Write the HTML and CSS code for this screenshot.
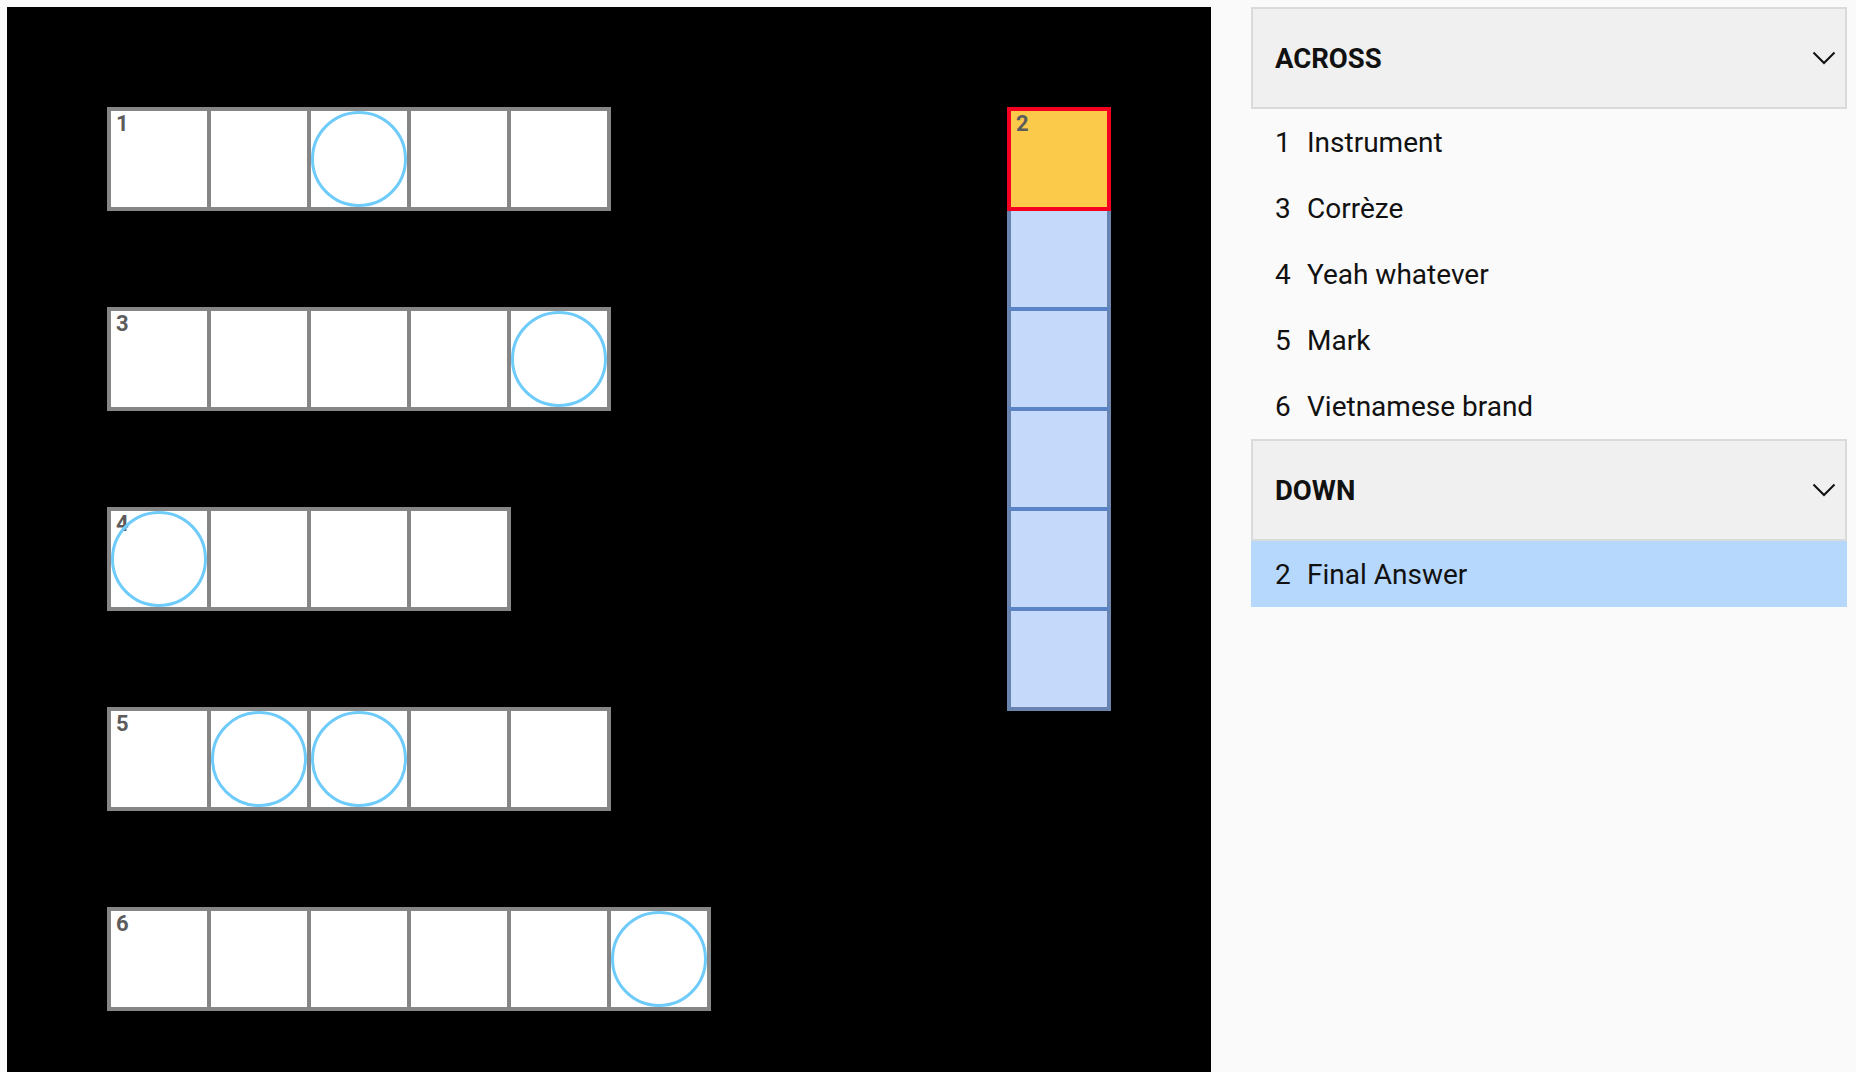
FILE: index.html
```html
<!DOCTYPE html>
<html lang="en">
<head>
<meta charset="utf-8">
<title>Crossword</title>
<link rel="stylesheet" href="styles.css">
</head>
<body>
<div class="app">
  <div class="board">
    <div class="word across w1">
      <div class="cell"><span class="num">1</span></div>
      <div class="cell"></div>
      <div class="cell"><span class="circle"></span></div>
      <div class="cell"></div>
      <div class="cell"></div>
    </div>
    <div class="word across w3">
      <div class="cell"><span class="num">3</span></div>
      <div class="cell"></div>
      <div class="cell"></div>
      <div class="cell"></div>
      <div class="cell"><span class="circle"></span></div>
    </div>
    <div class="word across w4">
      <div class="cell"><span class="num">4</span><span class="circle"></span></div>
      <div class="cell"></div>
      <div class="cell"></div>
      <div class="cell"></div>
    </div>
    <div class="word across w5">
      <div class="cell"><span class="num">5</span></div>
      <div class="cell"><span class="circle"></span></div>
      <div class="cell"><span class="circle"></span></div>
      <div class="cell"></div>
      <div class="cell"></div>
    </div>
    <div class="word across w6">
      <div class="cell"><span class="num">6</span></div>
      <div class="cell"></div>
      <div class="cell"></div>
      <div class="cell"></div>
      <div class="cell"></div>
      <div class="cell"><span class="circle"></span></div>
    </div>
    <div class="word down w2">
      <div class="cell active"><span class="num">2</span></div>
      <div class="cell hl"></div>
      <div class="cell hl"></div>
      <div class="cell hl"></div>
      <div class="cell hl"></div>
      <div class="cell hl"></div>
    </div>
  </div>

  <div class="clues">
    <section class="group">
      <div class="group-head">
        <span class="group-title">ACROSS</span>
        <svg class="chev" width="24" height="14" viewBox="0 0 24 14"><polyline points="1.5,1.5 12,12 22.5,1.5" fill="none" stroke="#111" stroke-width="2"/></svg>
      </div>
      <ul class="clue-list">
        <li class="clue"><span class="clue-num">1</span><span class="clue-text">Instrument</span></li>
        <li class="clue"><span class="clue-num">3</span><span class="clue-text">Corrèze</span></li>
        <li class="clue"><span class="clue-num">4</span><span class="clue-text">Yeah whatever</span></li>
        <li class="clue"><span class="clue-num">5</span><span class="clue-text">Mark</span></li>
        <li class="clue"><span class="clue-num">6</span><span class="clue-text">Vietnamese brand</span></li>
      </ul>
    </section>
    <section class="group">
      <div class="group-head">
        <span class="group-title">DOWN</span>
        <svg class="chev" width="24" height="14" viewBox="0 0 24 14"><polyline points="1.5,1.5 12,12 22.5,1.5" fill="none" stroke="#111" stroke-width="2"/></svg>
      </div>
      <ul class="clue-list">
        <li class="clue selected"><span class="clue-num">2</span><span class="clue-text">Final Answer</span></li>
      </ul>
    </section>
  </div>
</div>
</body>
</html>
```

FILE: styles.css
```css
html, body {
  margin: 0;
  padding: 0;
}

body {
  background: #fafafa;
  font-family: Roboto, "Liberation Sans", sans-serif;
  overflow: hidden;
}

.app {
  display: flex;
  align-items: flex-start;
  gap: 40px;
  padding: 7px;
}

/* ---------- board ---------- */
.board {
  flex: none;
  width: 1204px;
  height: 1204px;
  background: #000;
  display: grid;
  grid-template-columns: repeat(12, 100px);
  grid-template-rows: repeat(12, 100px);
}

.word {
  display: flex;
  align-self: start;
  justify-self: start;
}

.word.across { flex-direction: row; }
.word.down { flex-direction: column; }

.w1 { grid-row: 2; grid-column: 2 / span 5; }
.w3 { grid-row: 4; grid-column: 2 / span 5; }
.w4 { grid-row: 6; grid-column: 2 / span 4; }
.w5 { grid-row: 8; grid-column: 2 / span 5; }
.w6 { grid-row: 10; grid-column: 2 / span 6; }
.w2 { grid-row: 2 / span 6; grid-column: 11; }

.cell {
  box-sizing: border-box;
  width: 104px;
  height: 104px;
  flex: none;
  border: 4px solid #868686;
  background: #fff;
  position: relative;
}

.across .cell + .cell { margin-left: -4px; }
.down .cell + .cell { margin-top: -4px; }

.cell.hl {
  background: #c5d9fb;
  border-color: #6a84b0;
}

.cell.hl + .cell.hl {
  border-top-color: #5a84c6;
}

.cell.active {
  background: #fbca4b;
  border-color: #f60021;
  z-index: 1;
}

.num {
  position: absolute;
  top: 2px;
  left: 5px;
  font-size: 22px;
  line-height: 1;
  font-weight: 700;
  color: #5c5c5c;
}

.circle {
  position: absolute;
  inset: 0;
  box-sizing: border-box;
  border: 3px solid #6ecbfa;
  border-radius: 50%;
}

/* ---------- clues ---------- */
.clues {
  flex: none;
  width: 596px;
  display: flex;
  flex-direction: column;
}

.group-head {
  box-sizing: border-box;
  height: 102px;
  display: flex;
  align-items: center;
  justify-content: space-between;
  padding: 0 9px 0 22px;
  background: #f0f0f0;
  border: 2px solid #dadada;
}

.group-title {
  font-size: 27.5px;
  font-weight: 700;
  color: #111;
}

.chev {
  display: block;
}

.clue-list {
  list-style: none;
  margin: 0;
  padding: 0;
}

.clue {
  box-sizing: border-box;
  height: 66px;
  display: flex;
  align-items: center;
  padding: 1px 0 0 24px;
  font-size: 28px;
  color: #111;
}

.clue.selected {
  background: #b5d8fc;
}

.clue-num {
  width: 15px;
  margin-right: 17px;
}
```
